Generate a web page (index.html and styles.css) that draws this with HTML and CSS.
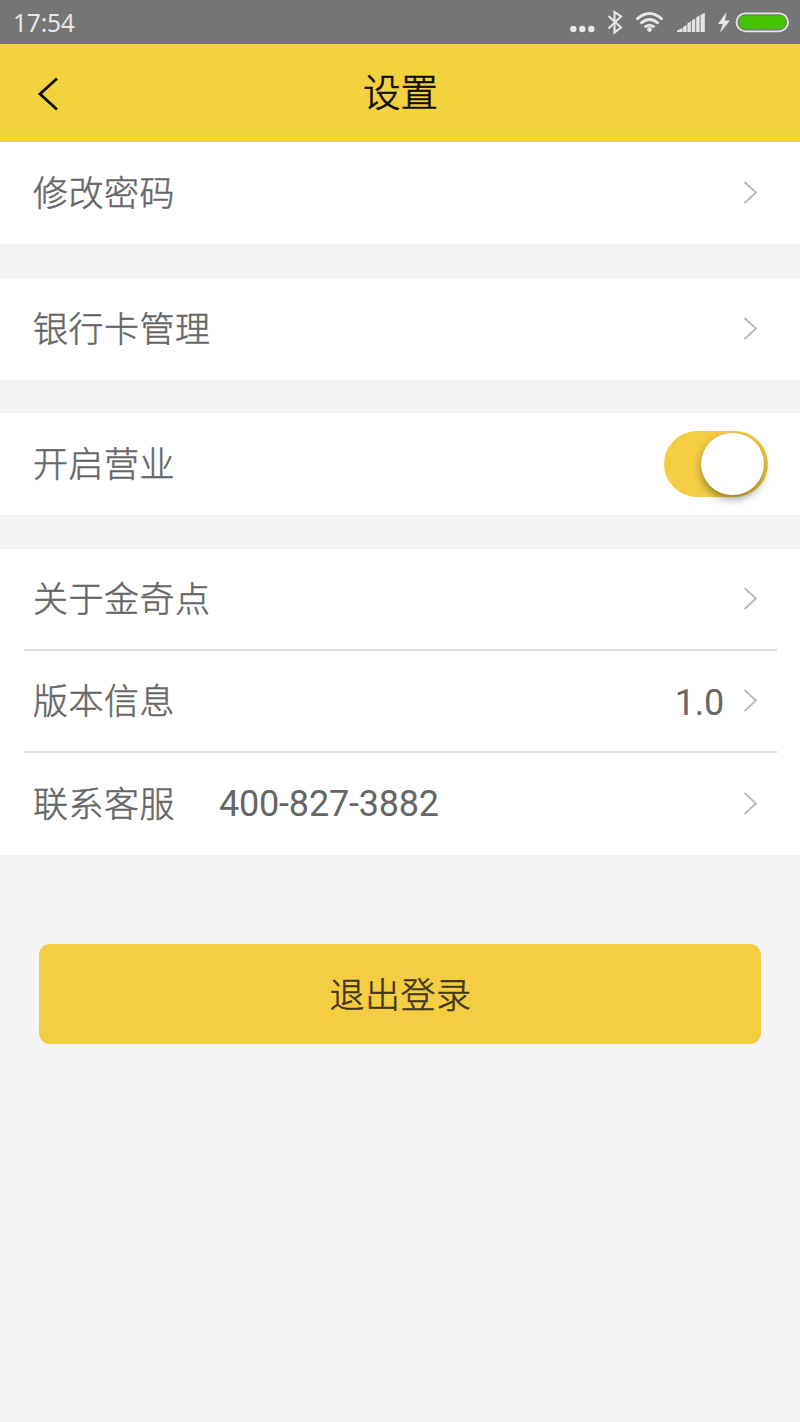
FILE: index.html
```html
<!DOCTYPE html>
<html lang="zh-CN">
<head>
<meta charset="utf-8">
<title>设置</title>
<link rel="stylesheet" href="styles.css">
</head>
<body>
<svg class="defs" aria-hidden="true"><symbol id="chevron" viewBox="0 0 16 24"><path d="M2.500 1 14 11.500 2.500 22" fill="none" stroke="#b8b8b8" stroke-width="1.800"/></symbol></svg>
<div class="status-bar">
  <span class="clock">17:54</span>
  <svg class="status-icons" viewBox="0 0 240 44" fill="#e6e6e6">
    <circle cx="13.300" cy="29" r="3.200"/><circle cx="22.300" cy="29" r="3.200"/><circle cx="31.300" cy="29" r="3.200"/>
    <path d="M48.500 16 61 27.500 54.500 32.500V12L61 16.500 48.500 28.500" fill="none" stroke="#e6e6e6" stroke-width="2.100"/>
    <g fill="none" stroke="#e6e6e6" stroke-width="2.700">
      <path d="M76.500 19.500Q89.500 7.500 102.500 19.500"/>
      <path d="M80.500 23.500Q89.500 15.500 98.500 23.500"/>
      <path d="M84.500 27.300Q89.500 23 94.500 27.300"/>
    </g>
    <circle cx="89.500" cy="29.500" r="2.400"/>
    <path d="M117 32v-1.500l5.500-2.500v4zM123.200 32v-5l3.400-2.300v7.300zM127.400 32v-8.500l3.400-2.300v10.800zM131.800 32v-11.500l3.400-2.300v13.800zM136.200 32v-14.500l3.400-2.300v16.800zM140.600 32v-17l4.200-2.300v19.300z"/>
    <path d="M166.500 12 158 24h4.800l-3 9L170 20.500h-5z"/>
    <rect x="176.500" y="13.300" width="51.500" height="18" rx="9" fill="#777" stroke="#e6e6e6" stroke-width="1.800"/>
    <rect x="178.800" y="15.400" width="47" height="13.600" rx="6" fill="#45c303"/>
  </svg>
</div>
<header class="title-bar">
  <svg class="back" viewBox="0 0 24 36"><path d="M21 2.500 4 18 21 33.500" fill="none" stroke="#100c00" stroke-width="2.800"/></svg>
  <h1 class="title">设置</h1>
</header>
<main class="settings">
  <section class="group">
    <div class="row"><span class="label">修改密码</span><svg class="arrow"><use href="#chevron"/></svg></div>
  </section>
  <section class="group">
    <div class="row"><span class="label">银行卡管理</span><svg class="arrow"><use href="#chevron"/></svg></div>
  </section>
  <section class="group">
    <div class="row row-toggle"><span class="label">开启营业</span><div class="toggle"><div class="knob"></div></div></div>
  </section>
  <section class="group">
    <div class="row"><span class="label">关于金奇点</span><svg class="arrow"><use href="#chevron"/></svg></div>
    <div class="divider"></div>
    <div class="row"><span class="label">版本信息</span><span class="version">1.0</span><svg class="arrow"><use href="#chevron"/></svg></div>
    <div class="divider"></div>
    <div class="row"><span class="label">联系客服</span><span class="phone">400-827-3882</span><svg class="arrow"><use href="#chevron"/></svg></div>
  </section>
  <button class="logout">退出登录</button>
</main>
</body>
</html>
```
FILE: styles.css
```css
* { box-sizing: border-box; }
body {
  margin: 0;
  min-height: 1422px;
  background: #f4f4f4;
  color: #666;
  font-family: Roboto, "Noto Sans CJK SC", sans-serif;
}
.defs { display: none; }
.status-bar {
  height: 44px;
  padding-left: 13px;
  display: flex;
  align-items: center;
  justify-content: space-between;
  background: #757575;
}
.clock {
  padding-top: 2px;
  color: #e6e6e6;
  font: 24.5px/32px "Noto Sans", sans-serif;
  letter-spacing: -0.2px;
}
.status-icons { width: 240px; height: 44px; }
.title-bar {
  height: 98px;
  padding: 0 36px;
  display: grid;
  grid-template-columns: 24px 1fr 24px;
  align-items: center;
  background: #f3d240;
}
.back { width: 24px; height: 36px; margin-top: 2px; }
.title {
  margin: 0;
  padding: 0 0 0 1px;
  color: #100c00;
  font-size: 37.5px;
  line-height: 50px;
  font-weight: 300;
  text-align: center;
  -webkit-text-stroke: .7px #100c00;
}
.settings { display: flex; flex-direction: column; gap: 33.6px; }
.group { background: #fff; }
.row {
  height: 102px;
  padding: 0 42px 0 33px;
  display: flex;
  align-items: center;
  font-size: 35px;
  font-weight: 300;
  line-height: 50px;
  letter-spacing: .5px;
  -webkit-text-stroke: .5px #666;
}
.label { padding-top: 4px; }
.group:last-of-type .row { height: 100px; }
.group:last-of-type .row:first-child { height: 100.500px; }
.group:last-of-type .row:last-child { height: 102px; }
.divider { height: 2px; margin: 0 23px 0 24px; background: #dedede; }
.arrow { width: 16px; height: 24px; margin-left: auto; }
.version, .phone {
  font-size: 36px;
  font-weight: 400;
  letter-spacing: -.2px;
  -webkit-text-stroke: 0;
}
.version { margin-left: auto; padding-top: 4px; }
.version + .arrow { margin-left: 18px; }
.phone { margin-left: 44px; }
.row-toggle { padding-right: 32px; }
.toggle {
  width: 104px;
  height: 66px;
  margin-left: auto;
  padding: 2px 4px;
  display: flex;
  justify-content: flex-end;
  border-radius: 33px;
  background: #f5cd43;
}
.knob {
  width: 63px;
  height: 62px;
  border-radius: 50%;
  background: #fff;
  box-shadow: 0 4px 8px rgba(0, 0, 0, .4);
}
.logout {
  height: 100px;
  margin: 55px 39px 0;
  padding: 6px 0 0 1px;
  border: 0;
  border-radius: 11px;
  background: #f5cd43;
  color: #3f351b;
  font: 300 35px/50px Roboto, "Noto Sans CJK SC", sans-serif;
  letter-spacing: .5px;
  -webkit-text-stroke: .5px #3f351b;
}
```
